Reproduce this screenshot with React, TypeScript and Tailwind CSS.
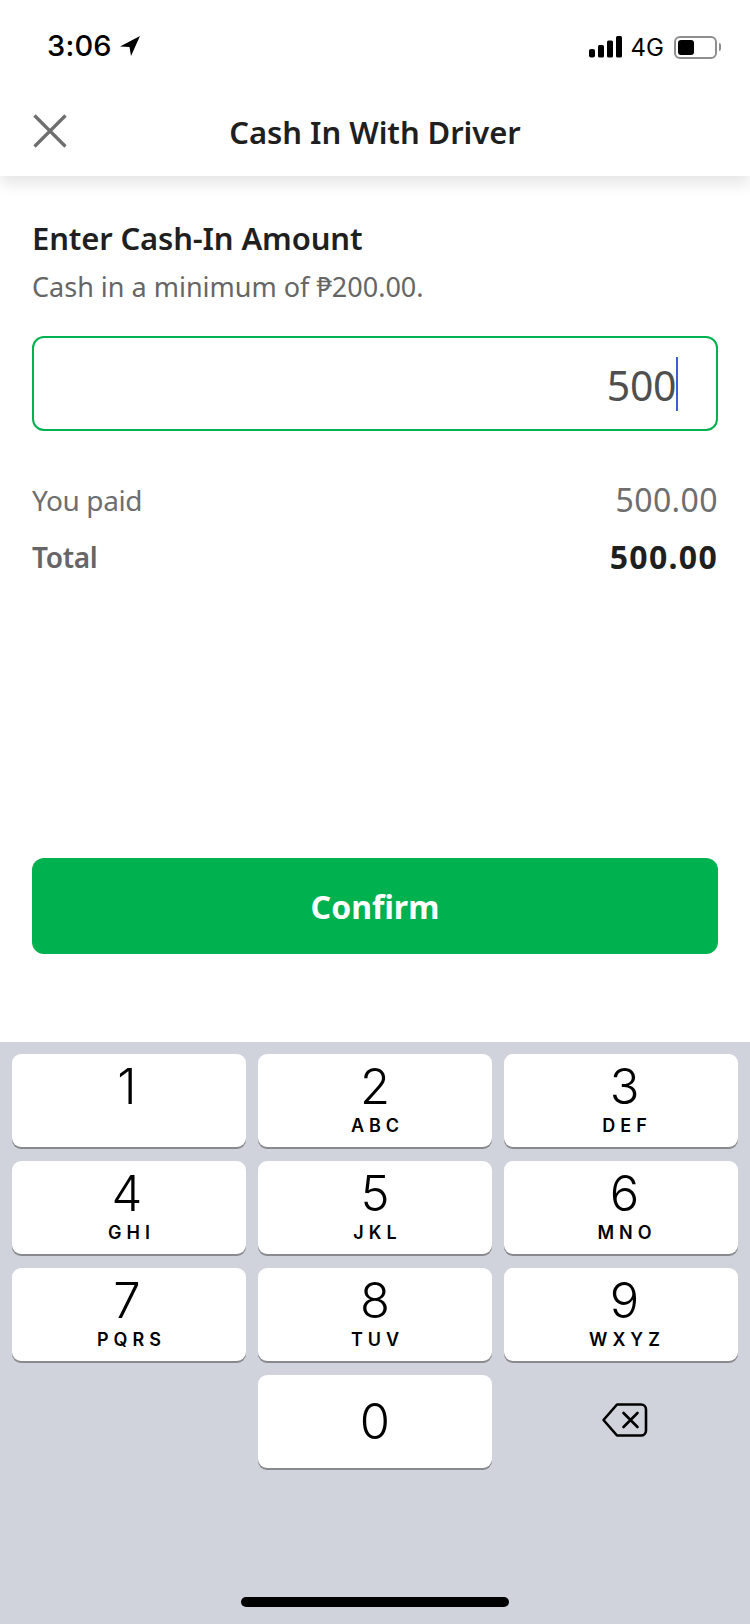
const keys = [
  ['1', ''],
  ['2', 'ABC'],
  ['3', 'DEF'],
  ['4', 'GHI'],
  ['5', 'JKL'],
  ['6', 'MNO'],
  ['7', 'PQRS'],
  ['8', 'TUV'],
  ['9', 'WXYZ'],
]

function Key({ num, letters, col }: { num: string; letters?: string; col: number }) {
  return (
    <div className={`h-[93px] rounded-[9px] bg-white shadow-[0_2px_0_#898a8d] flex flex-col items-center ${col === 2 ? 'pl-[7px]' : ''}`}>
      <div className={`font-['Inter',sans-serif] font-[350] text-[49px] leading-[56px] mt-[5px] text-black ${col === 0 ? 'pr-[4px]' : ''}`}>{num}</div>
      {letters ? (
        <div className="font-['Inter',sans-serif] text-[18px] leading-[20px] mt-[1px] pl-[5px] font-semibold tracking-[5px] text-black">{letters}</div>
      ) : null}
    </div>
  )
}

function StatusBar() {
  return (
    <div className="h-[92px] pl-[47px] pr-[29px] flex items-start justify-between font-['Inter',sans-serif] text-black">
      <div className="flex items-center mt-[29px] gap-[8px]">
        <span className="text-[29px] leading-[34px] font-medium tracking-[0.2px]">3:06</span>
        <svg width="20" height="20" viewBox="0 0 20 20">
          <path d="M20 0 L0 10.5 L9.5 11 L11 20 Z" fill="#000" />
        </svg>
      </div>
      <div className="flex items-center mt-[34px]">
        <svg width="33" height="22" viewBox="0 0 33 22">
          <rect x="0" y="13" width="6" height="8.5" rx="2" fill="#000" />
          <rect x="9" y="9" width="6" height="12.5" rx="1.5" fill="#000" />
          <rect x="18" y="4.5" width="6" height="17" rx="1.5" fill="#000" />
          <rect x="27" y="0" width="6" height="21.5" rx="1.5" fill="#000" />
        </svg>
        <span className="text-[24px] leading-[24px] ml-[9px] mt-[2px] font-normal">4G</span>
        <div className="ml-[10px] w-[43px] h-[23px] rounded-[6px] border-2 border-[#8e8e8e] p-[2px] flex">
          <div className="w-[16px] rounded-[3px] bg-black"></div>
        </div>
        <div className="w-[2px] h-[8px] bg-[#8e8e8e] rounded-r-full ml-[2px]"></div>
      </div>
    </div>
  )
}

export default function App() {
  return (
    <div className="w-[750px] h-[1624px] bg-white flex flex-col overflow-hidden font-['Noto_Sans',sans-serif]">
      <div className="relative z-10 bg-white shadow-[0_8px_14px_rgba(0,0,0,0.10)]">
        <StatusBar />
        <div className="h-[84px] relative flex items-center justify-center">
          <svg width="34" height="34" viewBox="0 0 34 34" className="absolute left-[33px] top-[22px]">
            <path d="M1.5 1.5 L32.5 32.5 M32.5 1.5 L1.5 32.5" stroke="#6e6e6e" strokeWidth="3.2" />
          </svg>
          <h1 className="text-[31px] leading-[40px] font-semibold text-[#1f1f1f] tracking-[-0.06px] -mt-[5px]">Cash In With Driver</h1>
        </div>
      </div>

      <div className="flex-1 px-[32px] pt-[41px] flex flex-col">
        <div className="text-[31px] leading-[42px] font-semibold text-[#1f1f1f] tracking-[-0.15px]">Enter Cash-In Amount</div>
        <div className="text-[27px] leading-[36px] mt-[10px] text-[#666666]">Cash in a minimum of ₱200.00.</div>

        <div className="mt-[31px] h-[95px] rounded-[12px] border-2 border-[#00b14f] flex items-center justify-end pr-[38px]">
          <span className="text-[41px] leading-[50px] text-[#4f4f4f] mt-[2px] tracking-[-0.4px]">500</span>
          <div className="w-[2px] h-[54px] bg-[#3a5fd9]"></div>
        </div>

        <div className="mt-[50px] flex items-center justify-between text-[28px] leading-[38px] text-[#6e6e6e] tracking-[-0.4px]">
          <span>You paid</span>
          <span className="text-[32px] tracking-[0.4px]">500.00</span>
        </div>
        <div className="mt-[19px] flex items-center justify-between text-[28px] leading-[38px] font-semibold tracking-[-0.3px]">
          <span className="text-[#666666]">Total</span>
          <span className="text-[32px] tracking-[1.3px] text-[#1f1f1f] font-bold">500.00</span>
        </div>

        <div className="mt-[282px] h-[96px] pt-[2px] rounded-[12px] bg-[#00b14f] flex items-center justify-center text-white text-[32px] font-bold">
          Confirm
        </div>
      </div>

      <div className="h-[582px] bg-[#d0d3dc] px-[12px] pt-[12px] relative">
        <div className="grid grid-cols-3 gap-x-[12px] gap-y-[14px]">
          {keys.map(([n, l], i) => (
            <Key key={n} num={n} letters={l} col={i % 3} />
          ))}
          <div></div>
          <div className="h-[93px] rounded-[9px] bg-white shadow-[0_2px_0_#898a8d] flex items-center justify-center font-['Inter',sans-serif] font-[350] text-[49px] text-black">
            0
          </div>
          <div className="flex items-center justify-center pl-[8px] pb-[4px]">
            <svg width="48" height="36" viewBox="0 0 48 36">
              <path d="M16 2.5 H40 a5 5 0 0 1 5 5 V28.5 a5 5 0 0 1 -5 5 H16 L2.5 18 Z" fill="none" stroke="#000" strokeWidth="2.6" strokeLinejoin="round" />
              <path d="M22.5 11 L36.5 25 M36.5 11 L22.5 25" stroke="#000" strokeWidth="2.6" strokeLinecap="round" />
            </svg>
          </div>
        </div>
        <div className="absolute left-[241px] bottom-[17px] w-[268px] h-[10px] rounded-full bg-black"></div>
      </div>
    </div>
  )
}
